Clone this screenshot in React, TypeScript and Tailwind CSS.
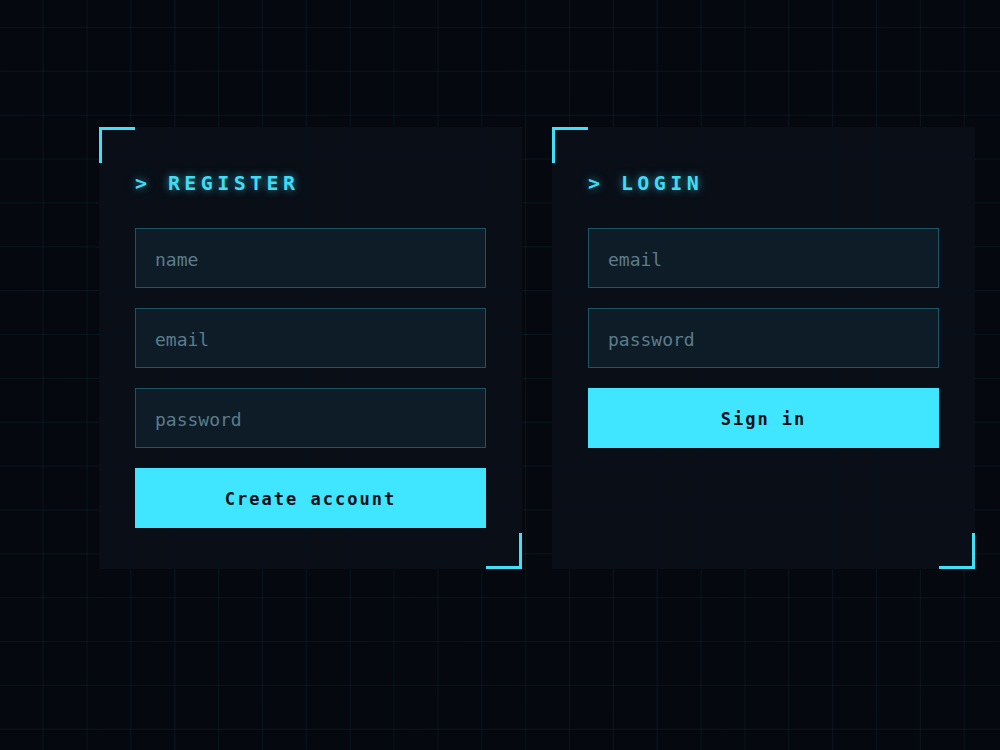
import React from 'react';

const mono = { fontFamily: '"DejaVu Sans Mono", "Liberation Mono", monospace' };

interface PanelProps {
  title: string;
  fields: string[];
  action: string;
}

const Corners: React.FC = () => (
  <>
    <div className="absolute left-0 top-0 w-[36px] h-[36px] border-t-[3px] border-l-[3px] border-[#40e0f8] pointer-events-none" />
    <div className="absolute right-0 bottom-0 w-[36px] h-[36px] border-b-[3px] border-r-[3px] border-[#40e0f8] pointer-events-none" />
  </>
);

const Panel: React.FC<PanelProps> = ({ title, fields, action }) => {
  return (
    <div className="relative w-[423px] bg-[#0a0f18]/95 pt-[36px] pb-[41px] px-[36px] flex flex-col">
      <Corners />
      {/* Heading */}
      <h2
        className="h-[40px] leading-[40px] mb-[25px] text-[20px] font-bold tracking-[4.4px] text-[#3fdcf5] whitespace-pre [text-shadow:0_0_8px_rgba(64,224,248,0.65)]"
        style={mono}
      >
        {'> ' + title}
      </h2>

      <div className="flex flex-col gap-[20px]">
        {fields.map((f) => (
          <input
            key={f}
            type={f === 'password' ? 'password' : 'text'}
            placeholder={f}
            style={mono}
            className="h-[60px] w-full bg-[#0e1c28] border border-[#1d5564] px-[19px] pt-[2px] text-[18px] text-[#a6c8d4] placeholder:text-[#5b7c8a] outline-none"
          />
        ))}
        <button
          style={mono}
          className="h-[60px] w-full bg-[#40e6ff] text-[#0a0f18] pt-[3px] text-[17px] font-bold tracking-[2px]"
        >
          {action}
        </button>
      </div>
    </div>
  );
};

export default function App() {
  return (
    <div className="w-full h-[750px] overflow-hidden bg-[#05090f] bg-[linear-gradient(to_right,rgba(64,224,248,0.055)_1px,transparent_1px),linear-gradient(to_bottom,rgba(64,224,248,0.055)_1px,transparent_1px)] bg-size-[43.86px_43.86px] bg-position-[42.7px_27px]">
      <div className="flex items-stretch gap-[30px] pt-[127px] pl-[99px]">
        <Panel title="REGISTER" fields={['name', 'email', 'password']} action="Create account" />
        <Panel title="LOGIN" fields={['email', 'password']} action="Sign in" />
      </div>
    </div>
  );
}
